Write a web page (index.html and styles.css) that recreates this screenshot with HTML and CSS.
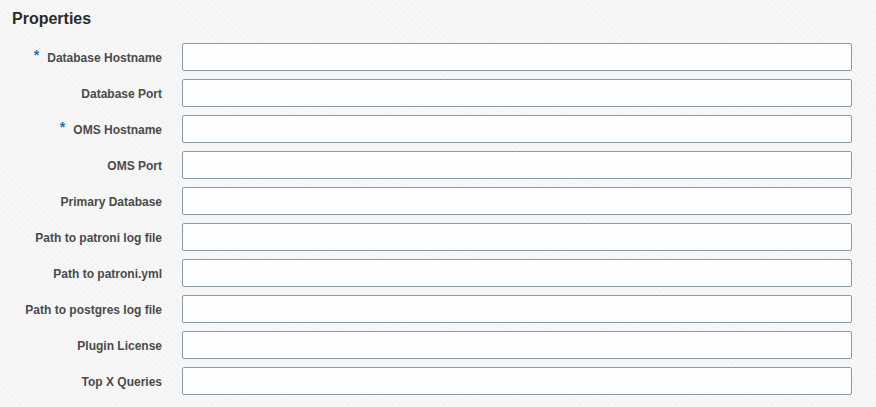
FILE: index.html
```html
<!DOCTYPE html>
<html>
<head>
<meta charset="utf-8">
<link rel="stylesheet" href="styles.css">
</head>
<body>
<div class="panel">
  <h2 class="title">Properties</h2>
  <div class="form">
    <label class="label"><span class="req">*</span>Database Hostname</label><input class="field" type="text">
    <label class="label">Database Port</label><input class="field" type="text">
    <label class="label"><span class="req">*</span>OMS Hostname</label><input class="field" type="text">
    <label class="label">OMS Port</label><input class="field" type="text">
    <label class="label">Primary Database</label><input class="field" type="text">
    <label class="label">Path to patroni log file</label><input class="field" type="text">
    <label class="label">Path to patroni.yml</label><input class="field" type="text">
    <label class="label">Path to postgres log file</label><input class="field" type="text">
    <label class="label">Plugin License</label><input class="field" type="text">
    <label class="label">Top X Queries</label><input class="field" type="text">
  </div>
</div>
</body>
</html>
```
FILE: styles.css
```css
html, body {
  margin: 0;
  padding: 0;
}
body {
  width: 876px;
  height: 407px;
  overflow: hidden;
  font-family: "Liberation Sans", Arial, sans-serif;
  background-color: #f5f5f5;
  background-image: repeating-linear-gradient(45deg, #f2f2f2 0px, #f2f2f2 1px, #f7f7f7 1px, #f7f7f7 4px);
}
.panel {
  padding: 9px 0 0 12px;
}
.title {
  margin: 0;
  font-size: 16px;
  line-height: 20px;
  font-weight: bold;
  color: #2b2b2b;
}
.form {
  margin-top: 14px;
  display: grid;
  grid-template-columns: 150px 670px;
  grid-auto-rows: 28px;
  column-gap: 20px;
  row-gap: 8px;
}
.label {
  display: flex;
  align-items: center;
  justify-content: flex-end;
  box-sizing: border-box;
  padding-top: 2px;
  font-size: 12px;
  font-weight: bold;
  color: #4a4a4a;
  white-space: nowrap;
}
.req {
  color: #2a6db5;
  font-size: 14px;
  margin-right: 8px;
  position: relative;
  top: -3px;
}
.field {
  box-sizing: border-box;
  width: 670px;
  height: 28px;
  margin: 0;
  padding: 0 6px;
  border: 1px solid #8b9ba6;
  border-radius: 2px;
  background: #fbfdfe;
  font-family: inherit;
  font-size: 12px;
}
```
